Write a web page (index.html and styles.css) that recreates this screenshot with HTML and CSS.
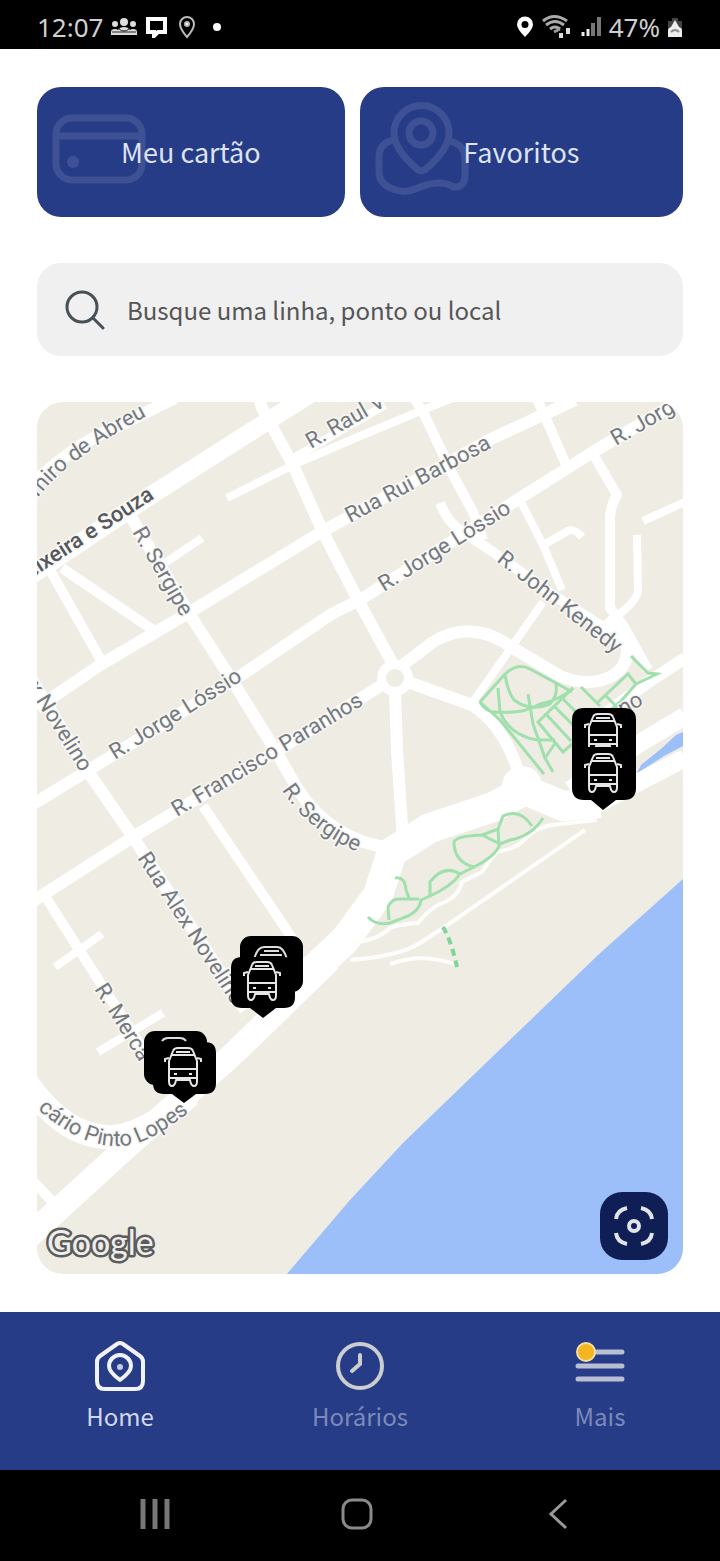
FILE: index.html
```html
<!DOCTYPE html>
<html lang="pt-BR">
<head>
<meta charset="UTF-8">
<meta name="viewport" content="width=device-width, initial-scale=1.0">
<title>Home</title>
<link rel="stylesheet" href="styles.css">
</head>
<body>

<header class="status-bar">
  <div class="status-left">
    <span>12:07</span>
    <svg width="28" height="20" viewBox="0 0 28 20" fill="#ddd">
      <circle cx="14" cy="5" r="4"/><circle cx="5" cy="7" r="3"/><circle cx="23" cy="7" r="3"/>
      <path d="M1 18v-3q0-3 4-3 2 0 3 1 2-3 6-3t6 3q1-1 3-1 4 0 4 3v3z"/>
      <path d="M2 15h24M9 12q5 4 10 0" stroke="#222" stroke-width="1" fill="none"/>
    </svg>
    <svg width="24" height="22" viewBox="0 0 24 22">
      <path d="M3 3h17v13h-7l-4 4v-4H3z" fill="none" stroke="#fff" stroke-width="4"/>
    </svg>
    <svg class="status-pin" width="18" height="24" viewBox="0 0 18 24" fill="none" stroke="#bbb" stroke-width="2">
      <path d="M9 22Q2 14 2 9a7 7 0 0 1 14 0q0 5-7 13z"/><circle cx="9" cy="9" r="2" fill="#fff"/>
    </svg>
    <span class="dot"></span>
  </div>
  <div class="status-right">
    <svg width="18" height="22" viewBox="0 0 18 22">
      <path d="M9 21Q1 13 1 8.500a8 8 0 0 1 16 0Q17 13 9 21zM9 5a3.500 3.500 0 1 0 0 7 3.500 3.500 0 0 0 0-7z" fill="#fff" fill-rule="evenodd"/>
    </svg>
    <svg width="32" height="26" viewBox="0 0 32 26" fill="none">
      <path d="M2 7q11-9 24 0M5 11q9-7 18 0M9 15q5-4 10 0" stroke="#aaa" stroke-width="3"/>
      <path d="M13 18l6-3" stroke="#999" stroke-width="3"/>
      <path d="M20 24v-5M27 20v-6" stroke="#ddd" stroke-width="4"/>
    </svg>
    <svg width="22" height="22" viewBox="0 0 22 22" fill="none">
      <path d="M3 20v-4M8 20v-7" stroke="#eee" stroke-width="3"/>
      <path d="M13 20V7M19 20V1" stroke="#777" stroke-width="4"/>
    </svg>
    <span>47%</span>
    <svg width="16" height="22" viewBox="0 0 16 22">
      <path d="M5 2h6v3h4v16H1V5h4z" fill="#444"/>
      <path d="M8 4l4 7q3 1 3 3v7H1v-7q0-2 3-3z" fill="#eee"/>
      <path d="M4 16q4-4 8 0" stroke="#888" stroke-width="2" fill="none"/>
    </svg>
  </div>
</header>

<main class="content">
  <div class="shortcuts">
    <button class="shortcut" type="button">
      <svg class="shortcut-icon card-icon" width="94" height="70" viewBox="0 0 94 70" fill="none" stroke="currentColor" stroke-width="7">
        <rect x="4" y="4" width="86" height="62" rx="16"/>
        <path d="M7 22h80"/>
        <circle cx="21" cy="48" r="6" fill="currentColor" stroke="none"/>
      </svg>
      <span>Meu cartão</span>
    </button>
    <button class="shortcut shortcut-wide" type="button">
      <svg class="shortcut-icon pin-icon" width="94" height="96" viewBox="0 0 94 96" fill="none" stroke="currentColor" stroke-width="7" stroke-linecap="round" stroke-linejoin="round">
        <path d="M41 67Q19 48 19 32a27 27 0 0 1 55 0q0 16-22 35-6 6-11 0z"/>
        <circle cx="46" cy="32" r="12"/>
        <path d="M15 40Q4 44 4 56v15q0 12 14 17 12 5 22 0 14-6 24-6 8 0 14 4 12 1 12-12V56q0-10-12-15"/>
      </svg>
      <span>Favoritos</span>
    </button>
  </div>

  <label class="search">
    <svg width="40" height="40" viewBox="0 0 40 40" fill="none" stroke="#465055" stroke-width="3" stroke-linecap="round">
      <circle cx="17" cy="17" r="15"/><path d="M28 28l10 10"/>
    </svg>
    <input type="text" placeholder="Busque uma linha, ponto ou local" aria-label="Busque uma linha, ponto ou local">
  </label>

  <section class="map">
    <svg class="map-canvas" viewBox="37 402 646 872">
      <defs>
        <g id="bus" fill="none" stroke="#e6e6e6" stroke-width="2" stroke-linejoin="round">
          <path d="M5 15L9 5q1-3 5-3h10q4 0 5 3l4 10v20q0 5-3 5t-4-6H12q-1 6-4 6t-3-5z"/>
          <path d="M8 9h22M12 6h14M5 23h28M5 32h28"/>
          <path d="M5 12l-4 1v3M33 12l4 1v3"/>
          <path d="M10 28h3M25 28h3"/>
        </g>
        <path id="line-abreu" d="M5 545Q45 480 80 458Q105 438 147 416"/>
        <path id="line-sergipe" d="M282 790Q310 835 372 858"/>
        <path id="line-lopes" d="M-10 1060Q35 1114 73 1134Q106 1152 138 1143Q162 1134 189 1112"/>
      </defs>

      <rect class="land" x="37" y="402" width="646" height="872"/>
      <path class="water" d="M683 879L598 955L403 1143L350 1200L286 1275H683z"/>

      <!-- streets -->
      <g class="roads">
        <path class="w8" d="M227 498L293 465L360 436L423 410L455 397"/>
        <path class="w8" d="M290 460L385 405"/>
        <path class="w8" d="M165 563L202 538M55 967L102 934M98 1052L163 1013"/>
        <path class="w8" d="M520 500L543 545L562 590M543 602L473 702"/>
        <path class="w8" d="M543 545L568 531Q574 528 582 537M643 521L685 502"/>
        <path class="w8" d="M637 535L638 590Q638 600 617 616"/>
        <path class="w10" d="M50 570L102 662M62 568L153 630M203 806L292 938"/>
        <path class="w10" d="M45 896L78 948L150 1060M30 1178L65 1215"/>
        <path class="w10" d="M440 503Q447 520 457 528L493 552L553 595L600 625L622 645"/>
        <path class="w10" d="M412 395L423 412L453 475L473 512L483 540M535 395L543 412L567 467"/>
        <path class="w10" d="M593 454L617 495Q610 506 610 520V608L623 625L648 670"/>
        <path class="w12" d="M25 490Q80 440 115 428L175 398"/>
        <path class="w12" d="M258 395L262 408L293 465L323 532L358 600L395 668"/>
        <path class="w12" d="M37 708L100 665L190 612L323 531L493 438L575 400"/>
        <path class="w12" d="M30 806L97 765L243 674L330 615L363 598L520 498L593 452L685 398"/>
        <path class="w12" d="M30 903L133 837L273 753L390 680"/>
        <path class="w12" d="M128 512L190 615L235 685L277 753L297 788Q330 840 390 848"/>
        <path class="w12" d="M20 660L87 770L133 837L245 1010"/>
        <path class="w12" d="M395 690L397 750L403 840"/>
        <path class="w12" d="M408 682L472 705Q505 725 521 780"/>
        <path class="w12" d="M403 665L433 642Q472 618 513 648L560 676Q590 688 612 676Q634 662 624 636L607 618"/>
        <path class="w12" d="M685 658L647 683L590 725L577 740"/>
        <path class="w18" d="M30 576L153 494L263 424L320 388"/>
        <path class="w18" d="M685 716L640 743L570 790"/>
        <path class="w18" d="M685 758L637 783L590 808"/>
        <path class="w24" d="M25 1080Q65 1140 115 1137Q150 1132 190 1095"/>
        <path class="w24" d="M25 1240L130 1144L230 1057L330 960"/>
        <path class="w30" d="M300 982L345 940L378 895L392 852L430 828L493 807L525 790L563 806L600 803"/>
      </g>
      <circle class="junction" cx="395" cy="678" r="18"/>
      <circle class="land" cx="395" cy="678" r="9"/>
      <circle class="junction" cx="522" cy="786" r="20"/>
      <path class="water" d="M637 773L641 765L662 748L676 735L683 732V746L664 756L650 765z"/>

      <!-- beach walks -->
      <g class="walks">
        <path d="M352 942Q375 942 390 928Q400 924 418 923Q428 910 440 904Q458 898 462 882L482 872L496 852Q518 848 524 840Q536 826 560 824L597 820"/>
        <path d="M350 960Q400 956 420 943L443 928L585 830"/>
        <path d="M390 964Q423 952 457 965"/>
      </g>

      <!-- parks -->
      <g class="green">
        <path d="M480 702L505 674Q518 662 530 669L556 683L572 692"/>
        <path d="M480 702L500 720L544 774M480 702Q487 714 500 712Q523 714 540 704Q560 700 573 688"/>
        <path d="M505 674Q507 690 514 700Q530 712 550 704Q558 696 556 683"/>
        <path d="M498 688L500 712Q510 736 538 740L555 740M528 694L533 724L545 758L553 772"/>
        <path d="M573 688L538 722L563 752L620 702M556 742L545 758M545 713L571 741M554 706L580 732M562 698L592 728"/>
        <path d="M581 687L600 706M596 704L628 674L636 684L615 708M606 696L617 707M636 684L657 674L648 673L631 656"/>
        <path d="M368 917Q376 926 390 923L408 916Q420 910 421 900L430 896Q452 886 460 874L474 867Q496 856 500 844L510 840Q532 836 543 818"/>
        <path d="M389 920L388 907Q392 898 400 899H419M395 878Q405 876 406 890L409 898"/>
        <path d="M430 896V882Q444 864 460 874M474 867Q454 862 454 842Q456 836 482 835L500 844M482 835L498 829L499 845M498 829L503 816Q520 808 532 826"/>
        <path class="dashed" d="M443 927Q451 940 457 967"/>
      </g>

      <!-- street names -->
      <g class="names">
        <text text-anchor="end"><textPath href="#line-abreu" startOffset="100%">Casimiro de Abreu</textPath></text>
        <text class="main-name" text-anchor="end" transform="translate(155 498) rotate(-33)">Teixeira e Souza</text>
        <text transform="translate(311 449) rotate(-30)">R. Raul V</text>
        <text transform="translate(350 523) rotate(-28)">Rua Rui Barbosa</text>
        <text transform="translate(384 592) rotate(-32)">R. Jorge Lóssio</text>
        <text transform="translate(616 446) rotate(-30)">R. Jorg</text>
        <text transform="translate(496 561) rotate(38)">R. John Kenedy</text>
        <text transform="translate(132 532) rotate(60)">R. Sergipe</text>
        <text text-anchor="end" transform="translate(81 773) rotate(58)">Rua Alex Novelino</text>
        <text transform="translate(115 760) rotate(-32)">R. Jorge Lóssio</text>
        <text transform="translate(177 817) rotate(-31)">R. Francisco Paranhos</text>
        <text><textPath href="#line-sergipe">R. Sergipe</textPath></text>
        <text transform="translate(137 858) rotate(57)">Rua Alex Novelino</text>
        <text transform="translate(94 989) rotate(58)">R. Merca</text>
        <text text-anchor="end"><textPath href="#line-lopes" startOffset="100%">cário Pinto Lopes</textPath></text>
        <text transform="translate(623 716) rotate(-30)">no</text>
      </g>

      <!-- bus stops -->
      <g class="stop">
        <path d="M584 708h40q12 0 12 12v68q0 12-12 12h-8l-13 10-12-10h-7q-12 0-12-12v-68q0-12 12-12z"/>
        <use href="#bus" x="584" y="712"/>
        <rect x="584" y="747" width="38" height="7"/>
        <use href="#bus" x="584" y="752"/>
      </g>
      <g class="stop">
        <rect x="240" y="936" width="63" height="56" rx="11"/>
        <path d="M254 960q3-13 10-13h13q7 0 10 13M260 955h22M264 951h15" fill="none" stroke="#ddd" stroke-width="2"/>
        <path d="M242 957h42q11 0 11 11v29q0 11-11 11h-8l-13 10-13-10h-8q-11 0-11-11v-29q0-11 11-11z"/>
        <use href="#bus" x="243" y="960"/>
      </g>
      <g class="stop">
        <rect x="144" y="1031" width="63" height="54" rx="11"/>
        <path d="M162 1041q2-3 6-3h12q4 0 6 3" fill="none" stroke="#ddd" stroke-width="2"/>
        <path d="M164 1042h41q11 0 11 11v30q0 11-11 11h-9l-12 9-12-9h-8q-11 0-11-11v-30q0-11 11-11z"/>
        <use href="#bus" x="164" y="1046"/>
      </g>

      <text class="brand" x="47" y="1255">Google</text>
    </svg>

    <button class="locate" type="button" aria-label="Minha localização">
      <svg width="40" height="40" viewBox="0 0 40 40" fill="none" stroke="#e2e4ea" stroke-width="4">
        <path d="M2 13Q3 4 13 2M27 2Q37 4 38 13M38 27Q37 36 27 38M13 38Q3 36 2 27"/>
        <circle cx="20" cy="20" r="5"/>
      </svg>
    </button>
  </section>
</main>

<nav class="tab-bar">
  <a class="tab active" href="#home">
    <svg width="50" height="50" viewBox="0 0 50 50" fill="none" stroke="#f2f3f8" stroke-width="4" stroke-linejoin="round">
      <path d="M22 3q3-2 6 0l17 12q3 2 3 6v19q0 8-8 8H10q-8 0-8-8V21q0-4 3-6z"/>
      <path d="M25 39q-11-8-11-14a11 11 0 0 1 22 0q0 6-11 14z"/>
      <circle cx="25" cy="26" r="3" fill="#c5cbe0" stroke="none"/>
    </svg>
    <span>Home</span>
  </a>
  <a class="tab" href="#horarios">
    <svg width="50" height="50" viewBox="0 0 50 50" fill="none" stroke="#cdcdcf" stroke-width="4" stroke-linecap="round">
      <circle cx="25" cy="25" r="22"/><path d="M25 14v9l-8 7"/>
    </svg>
    <span>Horários</span>
  </a>
  <a class="tab" href="#mais">
    <svg width="50" height="50" viewBox="0 0 50 50" fill="none" stroke="#b9bed2" stroke-width="5" stroke-linecap="round">
      <path d="M20 11h27M3 25h44M3 38h44"/>
      <circle cx="11" cy="11" r="9" fill="#f3b621" stroke="#f3dfa8" stroke-width="2"/>
    </svg>
    <span>Mais</span>
  </a>
</nav>

<footer class="system-bar">
  <button type="button" aria-label="Recentes">
    <svg width="32" height="32" viewBox="0 0 32 32" stroke="#777" stroke-width="5"><path d="M4 1v30M16 1v30M28 1v30"/></svg>
  </button>
  <button type="button" aria-label="Início">
    <svg width="32" height="32" viewBox="0 0 32 32" fill="none" stroke="#8a8a8a" stroke-width="3"><rect x="2" y="2" width="28" height="28" rx="9"/></svg>
  </button>
  <button type="button" aria-label="Voltar">
    <svg width="32" height="32" viewBox="0 0 32 32" fill="none" stroke="#999" stroke-width="3"><path d="M23 2L8 16l15 14"/></svg>
  </button>
</footer>

</body>
</html>
```
FILE: styles.css
```css
* {
  box-sizing: border-box;
}

body {
  margin: 0;
  min-height: 100vh;
  display: flex;
  flex-direction: column;
  background-color: #fff;
  font-family: "Noto Sans CJK SC", "Noto Sans", sans-serif;
}

button {
  font-family: inherit;
  border: none;
  padding: 0;
  cursor: pointer;
}

svg {
  display: block;
  flex: none;
}

/* Android status bar */
.status-bar {
  height: 49px;
  padding: 4px 37px 0;
  display: flex;
  justify-content: space-between;
  align-items: center;
  background-color: #000;
  color: #d0d0d0;
  font-family: "Noto Sans", sans-serif;
  font-size: 26px;
  line-height: 32px;
}

.status-left,
.status-right {
  display: flex;
  align-items: center;
  gap: 7px;
}

.status-pin {
  margin-left: 2px;
}

.dot {
  width: 8px;
  height: 8px;
  margin-left: 10px;
  border-radius: 50%;
  background-color: #fff;
}

.content {
  flex: 1;
  padding: 38px 37px;
  display: flex;
  flex-direction: column;
  gap: 46px;
}

.shortcuts {
  display: flex;
  gap: 15px;
}

.shortcut {
  position: relative;
  flex: 20;
  height: 130px;
  border-radius: 24px;
  background-color: #263c87;
  color: #dfe3f1;
  font-size: 27px;
  line-height: 36px;
}

.shortcut-wide {
  flex: 21;
}

.shortcut span {
  position: relative;
}

.shortcut-icon {
  position: absolute;
  left: 15px;
  color: #3e5195;
}

.card-icon {
  top: 27px;
}

.pin-icon {
  top: 14px;
}

.search {
  height: 93px;
  padding: 0 28px;
  display: flex;
  align-items: center;
  gap: 22px;
  border-radius: 24px;
  background-color: #f0f0f0;
}

.search input {
  flex: 1;
  min-width: 0;
  padding: 0;
  border: none;
  outline: none;
  background: none;
  font-family: inherit;
  font-size: 24px;
  line-height: 36px;
  color: #555;
}

.search input::placeholder {
  color: #555;
  opacity: 1;
}

/* Map */
.map {
  position: relative;
  overflow: hidden;
  border-radius: 26px;
}

.map-canvas {
  width: 100%;
  height: auto;
}

.land {
  fill: #efece4;
}

.water {
  fill: #9cbff9;
}

.junction {
  fill: #fff;
}

.roads path {
  fill: none;
  stroke: #fff;
  stroke-linejoin: round;
}

.roads .w8 { stroke-width: 8px; }
.roads .w10 { stroke-width: 10px; }
.roads .w12 { stroke-width: 12px; }
.roads .w18 { stroke-width: 18px; }
.roads .w24 { stroke-width: 24px; }
.roads .w30 { stroke-width: 30px; }

.walks path {
  fill: none;
  stroke: #fdfdfb;
  stroke-width: 4px;
}

.green path {
  fill: none;
  stroke: #9fe0ac;
  stroke-width: 3px;
}

.green .dashed {
  stroke: #7fd596;
  stroke-width: 4px;
  stroke-dasharray: 7 5;
}

.names text {
  font-family: Roboto, sans-serif;
  font-size: 22px;
  fill: #747980;
  stroke: #f8f7f4;
  stroke-width: 3px;
  stroke-linejoin: round;
  paint-order: stroke;
}

.names .main-name {
  font-weight: 500;
  fill: #55585c;
}

.stop {
  fill: #000;
}

.brand {
  font-family: Lato, sans-serif;
  font-size: 34px;
  fill: #eee;
  stroke: #5c5c5c;
  stroke-width: 5px;
  stroke-linejoin: round;
  paint-order: stroke;
}

.locate {
  position: absolute;
  right: 15px;
  bottom: 14px;
  width: 68px;
  height: 68px;
  display: flex;
  justify-content: center;
  align-items: center;
  border-radius: 22px;
  background-color: #0f1f56;
}

/* Bottom navigation */
.tab-bar {
  height: 158px;
  display: grid;
  grid-template-columns: repeat(3, 1fr);
  background-color: #263c87;
}

.tab {
  padding-top: 29px;
  display: flex;
  flex-direction: column;
  align-items: center;
  gap: 8px;
  color: #7d8ab9;
  font-size: 24px;
  line-height: 34px;
  text-decoration: none;
}

.tab.active {
  color: #d3d9ec;
}

.system-bar {
  height: 91px;
  padding: 0 60px 4px 54px;
  display: grid;
  grid-template-columns: repeat(3, 1fr);
  place-items: center;
  background-color: #000;
}

.system-bar button {
  background: none;
}
```
